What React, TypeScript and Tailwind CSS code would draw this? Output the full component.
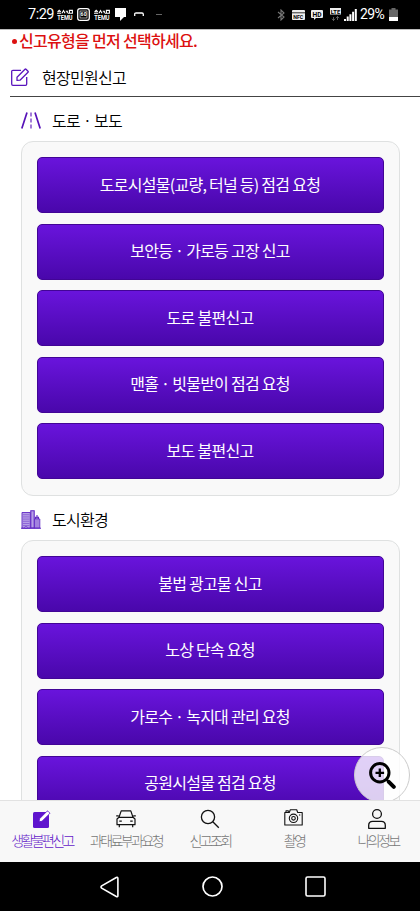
import type { ReactNode } from "react";

const roadItems = [
  "도로시설물(교량, 터널 등) 점검 요청",
  "보안등 · 가로등 고장 신고",
  "도로 불편신고",
  "맨홀 · 빗물받이 점검 요청",
  "보도 불편신고",
];

const cityItems = [
  "불법 광고물 신고",
  "노상 단속 요청",
  "가로수 · 녹지대 관리 요청",
  "공원시설물 점검 요청",
];

function TemuIcon() {
  return (
    <svg className="overflow-visible" width="16" height="14" viewBox="0 0 16 14" fill="none" stroke="#fff">
      <path d="M0 5.2h4.2M2 2.2v2M.6 3.8l1.6-1.6 1.6 1.6M5 5.2l1.5-2.6L8 5.2M8.8 3.2h1.5v2M11 5.2h1M12.4 2.4h3v2.8h-3z" strokeWidth="1.1" />
      <text x=".3" y="11.7" fill="#fff" stroke="none" fontFamily="Roboto, sans-serif" fontWeight="700" fontSize="6.4" textLength="15.2" lengthAdjust="spacingAndGlyphs">TEMU</text>
    </svg>
  );
}

function StatusBar() {
  return (
    <header className="flex h-[29px] shrink-0 items-center bg-black pr-[22px] pl-7 font-[Roboto,sans-serif] text-[14.5px] text-white">
      <span className="w-[26px] tracking-[-0.5px]">7:29</span>
      <div className="ml-[3px] flex items-center">
        <TemuIcon />
        <svg className="ml-1" width="13" height="13" viewBox="0 0 13 13" fill="none" stroke="#fff">
          <rect x=".7" y=".7" width="11.6" height="11.6" rx="2.4" strokeWidth="1.3" />
          <rect x="3" y="3" width="7" height="7" strokeWidth=".6" />
          <text x="3.5" y="8.4" fill="#fff" stroke="none" fontFamily="Roboto, sans-serif" fontWeight="700" fontSize="5" textLength="6">60</text>
        </svg>
        <span className="ml-1"><TemuIcon /></span>
        <svg className="ml-[5px]" width="11" height="13" viewBox="0 0 11 13" fill="#fff"><path d="M0 0h11v9H9l-4 4V9H0z" /></svg>
        <svg className="ml-2" width="10" height="5" viewBox="0 0 10 5" fill="none" stroke="#fff" strokeWidth="1.3"><path d="M.7 4V2.2Q.7 1 2 1h6q1.3 0 1.3 1.2V4" /></svg>
        <span className="ml-[12px] h-px w-[6px] bg-[#666]" />
      </div>
      <div className="ml-auto flex items-center">
        <svg width="8" height="12" viewBox="0 0 8 12" fill="none" stroke="#777" strokeWidth="1.1"><path d="m1 3 6 5-3 3V1l3 3-6 5" /></svg>
        <svg className="ml-[7px]" width="13" height="10" viewBox="0 0 13 10">
          <rect width="13" height="10" rx="1" fill="#eee" />
          <path d="M0 2.8h13" stroke="#000" strokeWidth=".8" />
          <text x="1.3" y="8.6" fill="#000" fontFamily="Roboto, sans-serif" fontWeight="700" fontSize="5.5" textLength="10" lengthAdjust="spacingAndGlyphs">NFC</text>
        </svg>
        <svg className="ml-[6px]" width="12" height="10" viewBox="0 0 12 10">
          <path d="M1 0h10q1 0 1 1v6q0 1-1 1H5l-2 2V8H1Q0 8 0 7V1q0-1 1-1" fill="#eee" />
          <text x="1.5" y="6.6" fill="#000" fontFamily="Roboto, sans-serif" fontWeight="700" fontSize="7" textLength="9" lengthAdjust="spacingAndGlyphs">HD</text>
        </svg>
        <svg className="ml-[7px]" width="11" height="13" viewBox="0 0 11 13">
          <rect width="11" height="6.5" fill="#eee" />
          <text x=".8" y="5.5" fill="#000" fontFamily="Roboto, sans-serif" fontWeight="700" fontSize="6" textLength="9.4" lengthAdjust="spacingAndGlyphs">LTE</text>
          <path d="M3.5 12.5V9M2 10.8l1.5 1.7L5 10.8M7.5 8.5V12M6 10.2l1.5-1.7L9 10.2" fill="none" stroke="#777" strokeWidth=".8" />
        </svg>
        <svg className="ml-[3px]" width="13" height="12" viewBox="0 0 13 12" fill="#fff"><path d="M0 10h2v2H0zm2.7-2.4h2V12h-2zm2.7-2.4h2V12h-2zM8.1 2.8h2V12h-2zM10.8 0h2v12h-2z" /></svg>
        <span className="ml-[3px] w-[25px] text-[14px] tracking-[-0.6px]">29%</span>
        <svg className="ml-[4px]" width="9" height="13" viewBox="0 0 9 13"><path d="M2.5 0h4v1.5H9V13H0V1.5h2.5z" fill="#666" /><path d="M0 9h9v4H0z" fill="#fff" /></svg>
      </div>
    </header>
  );
}

function RoadIcon() {
  return (
    <svg width="20" height="17" viewBox="0 0 20 17" fill="none" stroke="#5712b8" strokeWidth="1.7">
      <path d="M6 .5.8 16.5M14 .5l5.2 16" />
      <path d="M10 .5v4M10 6.5v4M10 12.5v4" strokeWidth="1.1" />
    </svg>
  );
}

function CityIcon() {
  return (
    <svg width="20" height="19" viewBox="0 0 20 19" stroke="#5f27c4">
      <path d="M1 18.2V2.5h8.3v15.7zM13.2 9h5.6v9h-5.6z" fill="#b79fe6" strokeWidth=".9" />
      <path d="M9.8 18V.7h3.4V18z" fill="#b79fe6" strokeWidth="1.1" />
      <path d="M16 9V5M14.5 9V7.2h3V9M0 18.3h20" fill="none" strokeWidth="1.1" />
      <path d="M2 4.7h6.5M2 6.9h6.5M2 9.1h6.5M2 11.3h6.5M2 13.5h6.5M2 15.6h6.5" stroke="#7c4dd0" strokeWidth=".7" />
      <path d="M15 10v8M17 10v8" stroke="#7c4dd0" strokeWidth=".7" />
      <path d="M4 18v-1.3h2V18z" fill="#fff" strokeWidth=".7" />
    </svg>
  );
}

function Section({ icon, title, items }: { icon: ReactNode; title: string; items: string[] }) {
  return (
    <section className="shrink-0 pr-5 pl-[21px]">
      <h2 className="flex h-11 items-center gap-[11px] pt-px text-[16px] font-[350] tracking-[-0.7px] text-black">
        <span className="pt-[2px]">{icon}</span>
        <span>{title}</span>
      </h2>
      <div className="flex flex-col gap-[10.5px] rounded-[12px] border border-[#dfe1e1] bg-[#f9f9f9] px-[15px] pt-[15px] pb-4">
        {items.map((item) => (
          <button
            key={item}
            className="h-14 shrink-0 rounded-[5px] border border-[#420596] bg-linear-to-b from-[#6914dc] to-[#4907ab] pr-px pb-[3px] text-[16px] tracking-[-0.73px] text-white"
          >
            {item}
          </button>
        ))}
      </div>
    </section>
  );
}

function Tab({ icon, label, active = false }: { icon: ReactNode; label: string; active?: boolean }) {
  return (
    <button className={`flex flex-1 flex-col items-center whitespace-nowrap pt-[7px] text-[14px] leading-5 font-light tracking-[-2.6px] ${active ? "text-[#6419c8]" : "text-[#777]"}`}>
      <span className="flex h-[22px] items-center justify-center">{icon}</span>
      <span>{label}</span>
    </button>
  );
}

export default function App() {
  return (
    <div className="flex h-[911px] w-[420px] flex-col overflow-hidden bg-white font-['Noto_Sans_CJK_KR',sans-serif]">
      <StatusBar />
      <main className="relative flex h-[771px] shrink-0 flex-col overflow-hidden border-t border-[#bbb] bg-white">
        <p className="flex h-[23px] shrink-0 items-center pb-1 pl-3 text-[16px] font-medium tracking-[-0.7px] text-[#dc1010]">
          <span className="mt-[4px] mr-[2px] size-[5px] rounded-full bg-[#dc1010]" />
          신고유형을 먼저 선택하세요.
        </p>
        <h1 className="ml-[10px] flex h-[44px] shrink-0 items-center gap-[13px] border-b border-[#444] pt-[4px] pl-px text-[16px] font-[350] tracking-[-0.72px] text-black">
          <svg className="mt-px" width="18" height="18" viewBox="0 0 18 18" fill="none" stroke="#5914bd" strokeWidth="1.3" strokeLinejoin="round">
            <path d="M10 2.3H1.9Q.7 2.3.7 3.5v12.6q0 1.2 1.2 1.2h12.6q1.2 0 1.2-1.2V9" />
            <path d="m6 9.2 8-8q.5-.5 1 0l2 2q.5.5 0 1l-8 8L6 12.4z" />
          </svg>
          <span>현장민원신고</span>
        </h1>
        <Section icon={<RoadIcon />} title="도로 · 보도" items={roadItems} />
        <Section icon={<CityIcon />} title="도시환경" items={cityItems} />
        <button className="absolute right-[10px] bottom-[-3px] flex size-14 items-center justify-center rounded-full border border-[#ccc] bg-white/80" aria-label="확대">
          <svg width="28" height="28" viewBox="0 0 28 28" fill="none" stroke="#000">
            <circle cx="11.8" cy="11.8" r="9.2" strokeWidth="3" />
            <path d="M11.8 7.5v8.6M7.5 11.8h8.6" strokeWidth="2.3" />
            <path d="m18.5 18.5 2.5 2.5" strokeWidth="2.4" />
            <path d="m20.8 20.8 5 5" strokeWidth="4" strokeLinecap="round" />
          </svg>
        </button>
      </main>
      <nav className="flex h-[62px] shrink-0 border-t border-[#e2e2e2] bg-[#f8f8f8]">
        <Tab
          active
          label="생활불편신고"
          icon={
            <svg className="mr-[2px]" width="19" height="20" viewBox="0 0 19 20">
              <rect x="1" y="3" width="16" height="16" rx="1.5" fill="#5f14ce" />
              <path d="m7.5 9.8 7.3-7.4q.7-.7 1.4 0l1.2 1.2q.7.7 0 1.4L10 12.3l-3 .5z" fill="#fff" stroke="#5f14ce" strokeWidth=".9" />
            </svg>
          }
        />
        <Tab
          label="과태료부과요청"
          icon={
            <svg width="20" height="18" viewBox="0 0 20 18" fill="none" stroke="#111" strokeWidth="1.2" strokeLinejoin="round">
              <path d="M3 7.3 5.2.9h9.6L17 7.3M1 14.7V9l2-1.7h14L19 9v5.7zM3.3 14.7v2.6M16.7 14.7v2.6M.2 5.8h2.5M17.3 5.8h2.5M3.3 11.2h2.5M14.2 11.2h2.5" />
            </svg>
          }
        />
        <Tab
          label="신고조회"
          icon={
            <svg className="mr-px" width="20" height="20" viewBox="0 0 20 20" fill="none" stroke="#111" strokeWidth="1.3"><circle cx="8" cy="8" r="6.6" /><path d="m12.8 12.8 6 6" /></svg>
          }
        />
        <Tab
          label="촬영"
          icon={
            <svg className="mr-[2px] mb-[2px]" width="19" height="18" viewBox="0 0 19 18" fill="none" stroke="#111" strokeWidth="1.1" strokeLinejoin="round">
              <path d="M.8 3.5h4.5l1-2.7h6.4l1 2.7h4.5V16H.8zM2 3.3V1.8h2.3v1.5" />
              <circle cx="9.5" cy="9.3" r="4.2" /><circle cx="9.5" cy="9.3" r="1.8" /><path d="M15 6h1.3" />
            </svg>
          }
        />
        <Tab
          label="나의정보"
          icon={
            <svg className="mr-[2px]" width="20" height="22" viewBox="0 0 20 22" fill="none" stroke="#111" strokeWidth="1.3"><circle cx="10" cy="6" r="4.4" /><path d="M1.7 20.3v-3q0-4 4-4h8.6q4 0 4 4v3z" strokeLinejoin="round" /></svg>
          }
        />
      </nav>
      <footer className="flex h-[49px] shrink-0 items-center bg-black pl-[100px]">
        <svg width="19" height="22" viewBox="0 0 19 22" fill="none" stroke="#fff" strokeWidth="1.6"><path d="M16.3 1.5q1.6-.8 1.6 1v17q0 1.8-1.6 1L1.7 12.2q-1.4-1.2 0-2.4z" /></svg>
        <svg className="ml-[83px]" width="21" height="21" viewBox="0 0 21 21" fill="none" stroke="#fff" strokeWidth="1.7"><circle cx="10.5" cy="10.5" r="9.5" /></svg>
        <svg className="ml-[82px]" width="21" height="21" viewBox="0 0 21 21" fill="none" stroke="#fff" strokeWidth="1.6"><rect x="1" y="1" width="19" height="19" rx="1.5" /></svg>
      </footer>
    </div>
  );
}
